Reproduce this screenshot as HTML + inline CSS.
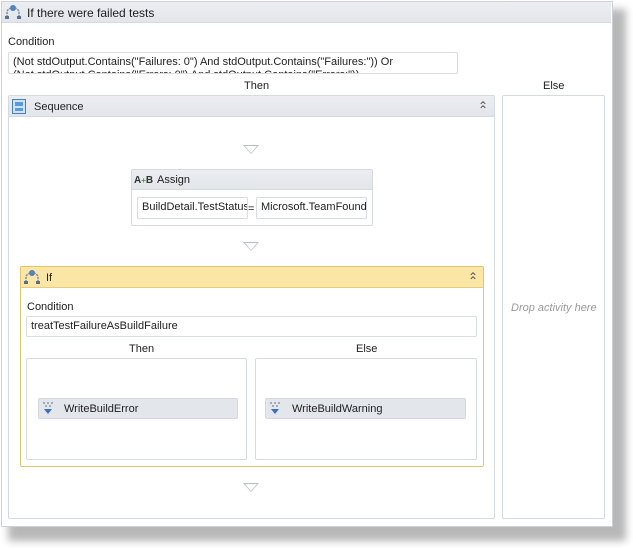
<!DOCTYPE html>
<html><head><meta charset="utf-8"><style>
*{box-sizing:border-box;margin:0;padding:0}
body{width:633px;height:548px;background:#fff;position:relative;overflow:hidden;font-family:"Liberation Sans",sans-serif;font-size:11px;color:#1e1e1e}
.a{position:absolute}
.box{position:absolute;border:1px solid #d5d9e0;border-radius:2px;background:#fff}
.hdr{position:absolute;background:linear-gradient(#eceef2,#e2e5ea);border-bottom:1px solid #d5d9e0}
.inp{position:absolute;border:1px solid #d8dce3;border-radius:2px;background:#fff;padding:2px 4px;white-space:nowrap;overflow:hidden;line-height:13px}
.tri{position:absolute;width:0;height:0;border-left:8px solid transparent;border-right:8px solid transparent;border-top:9px solid #b8bcc4}
.tri:after{content:"";position:absolute;left:-6px;top:-8px;border-left:6px solid transparent;border-right:6px solid transparent;border-top:7px solid #fff}
.act{position:absolute;background:#e3e6ea;border:1px solid #d5d9de;border-radius:2px;height:21px}
.chev{position:absolute;font-size:12px;color:#555;line-height:10px}
</style></head><body>
<div class="a" style="left:8px;top:9px;width:618px;height:532px;background:#9a9a9a;filter:blur(4px);opacity:.7"></div>
<div class="a" style="left:1px;top:1px;width:612px;height:526px;background:#fff;border:1px solid #cdd1d8"></div>
<div class="hdr" style="left:2px;top:2px;width:609px;height:21px"></div>
<svg class="a" style="left:4px;top:4px" width="18" height="16" viewBox="0 0 18 16"><circle cx="9" cy="4" r="3" fill="#4a7fc4"/><path d="M3 13 L3 7 Q9 0 15 7 L15 13" fill="none" stroke="#7a8aa0" stroke-width="1.5" stroke-dasharray="2 1"/><rect x="1" y="12" width="4" height="3" fill="#5a6f8c"/><rect x="13" y="12" width="4" height="3" fill="#5a6f8c"/></svg>
<div class="a" style="left:27px;top:6px;font-size:12px">If there were failed tests</div>
<div class="a" style="left:8px;top:36px">Condition</div>
<div class="inp" style="left:8px;top:52px;width:450px;height:22px;padding-top:3px">(Not stdOutput.Contains("Failures: 0") And stdOutput.Contains("Failures:")) Or<br>(Not stdOutput.Contains("Errors: 0") And stdOutput.Contains("Errors:"))</div>
<div class="a" style="left:244px;top:80px">Then</div>
<div class="a" style="left:543px;top:80px">Else</div>
<div class="box" style="left:8px;top:95px;width:487px;height:424px"></div>
<div class="hdr" style="left:9px;top:96px;width:485px;height:21px"></div>
<svg class="a" style="left:12px;top:99px" width="14" height="15"><rect x="0.5" y="0.5" width="13" height="14" fill="#cfe3f6" stroke="#4a7fb8"/><rect x="3" y="3" width="8" height="4" fill="#5a9ad8"/><rect x="3" y="9" width="8" height="3" fill="#5a9ad8"/></svg>
<div class="a" style="left:34px;top:101px">Sequence</div>
<div class="chev" style="left:478px;top:101px">&#8963;</div>
<div class="chev" style="left:478px;top:105px">&#8963;</div>
<div class="tri" style="left:243px;top:145px"></div>
<div class="box" style="left:131px;top:169px;width:242px;height:57px"></div>
<div class="hdr" style="left:132px;top:170px;width:240px;height:20px"></div>
<div class="a" style="left:134px;top:175px;font-size:10px"><b style="color:#333">A</b><b style="color:#3a3;font-size:8px">+</b><b style="color:#333">B</b></div>
<div class="a" style="left:157px;top:174px">Assign</div>
<div class="inp" style="left:137px;top:197px;width:111px;height:22px;line-height:15px">BuildDetail.TestStatus</div>
<div class="a" style="left:248px;top:203px">=</div>
<div class="inp" style="left:256px;top:197px;width:111px;height:22px;line-height:15px">Microsoft.TeamFoundation</div>
<div class="tri" style="left:243px;top:242px"></div>
<div class="a" style="left:20px;top:266px;width:464px;height:201px;border:1px solid #e2c66e;border-radius:2px"></div>
<div class="a" style="left:21px;top:267px;width:462px;height:21px;background:#fce6a6;border-bottom:1px solid #e6cc7e"></div>
<svg class="a" style="left:23px;top:269px" width="18" height="16" viewBox="0 0 18 16"><circle cx="9" cy="4" r="3" fill="#4a7fc4"/><path d="M3 13 L3 7 Q9 0 15 7 L15 13" fill="none" stroke="#7a8aa0" stroke-width="1.5" stroke-dasharray="2 1"/><rect x="1" y="12" width="4" height="3" fill="#5a6f8c"/><rect x="13" y="12" width="4" height="3" fill="#5a6f8c"/></svg>
<div class="a" style="left:46px;top:272px">If</div>
<div class="chev" style="left:468px;top:272px">&#8963;</div>
<div class="chev" style="left:468px;top:276px">&#8963;</div>
<div class="a" style="left:27px;top:301px">Condition</div>
<div class="inp" style="left:26px;top:316px;width:451px;height:21px;line-height:15px">treatTestFailureAsBuildFailure</div>
<div class="a" style="left:129px;top:343px">Then</div>
<div class="a" style="left:356px;top:343px">Else</div>
<div class="box" style="left:26px;top:358px;width:221px;height:102px"></div>
<div class="box" style="left:255px;top:358px;width:222px;height:102px"></div>
<div class="act" style="left:38px;top:398px;width:200px"></div>
<div class="act" style="left:265px;top:398px;width:201px"></div>
<svg class="a" style="left:42px;top:401px" width="12" height="15"><g fill="#8a9ab0"><circle cx="2" cy="2" r="1"/><circle cx="6" cy="2" r="1"/><circle cx="10" cy="2" r="1"/><circle cx="4" cy="5" r="1"/><circle cx="8" cy="5" r="1"/></g><path d="M2 8 H10 L6 13Z" fill="#3a6fc0"/></svg>
<svg class="a" style="left:269px;top:401px" width="12" height="15"><g fill="#8a9ab0"><circle cx="2" cy="2" r="1"/><circle cx="6" cy="2" r="1"/><circle cx="10" cy="2" r="1"/><circle cx="4" cy="5" r="1"/><circle cx="8" cy="5" r="1"/></g><path d="M2 8 H10 L6 13Z" fill="#3a6fc0"/></svg>
<div class="a" style="left:64px;top:403px">WriteBuildError</div>
<div class="a" style="left:292px;top:403px">WriteBuildWarning</div>
<div class="tri" style="left:243px;top:483px"></div>
<div class="box" style="left:502px;top:95px;width:103px;height:424px"></div>
<div class="a" style="left:511px;top:302px;font-style:italic;color:#9a9a9a">Drop activity here</div>
</body></html>
